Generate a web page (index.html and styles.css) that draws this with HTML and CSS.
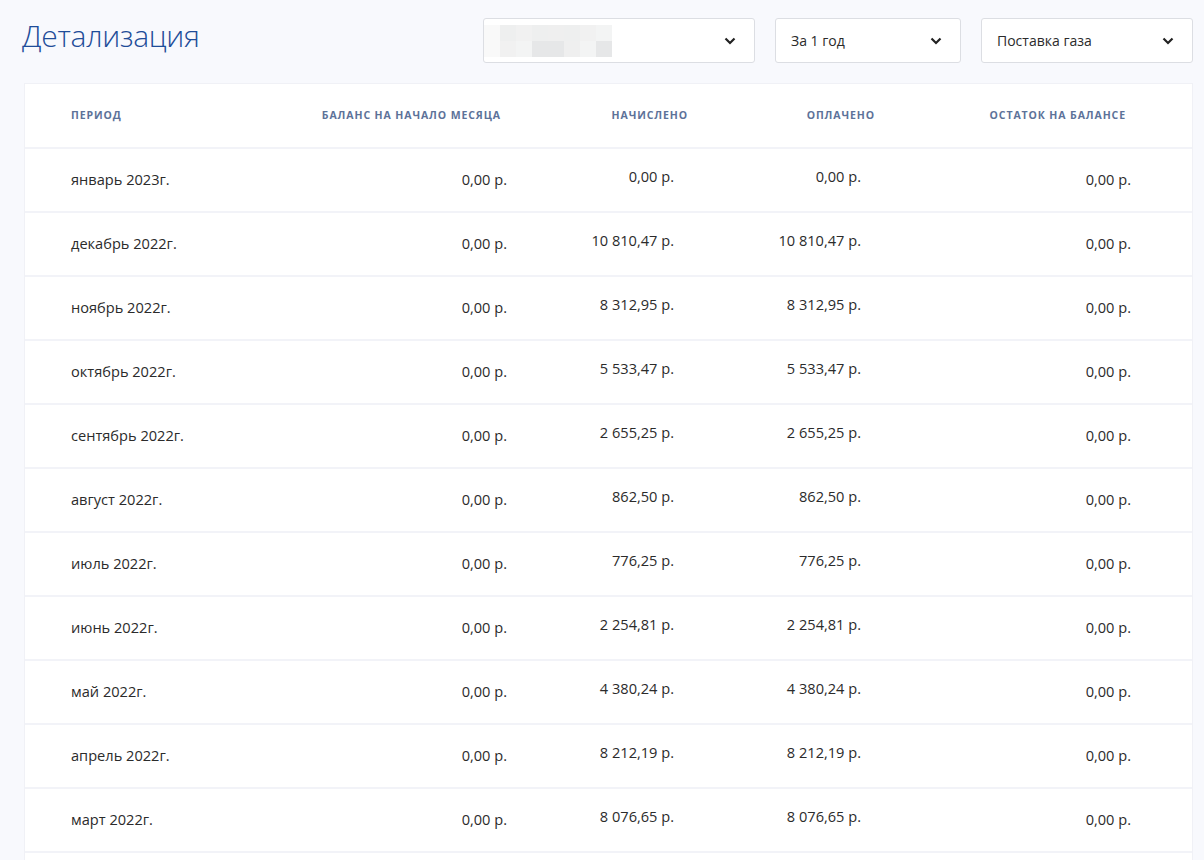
FILE: index.html
```html
<!DOCTYPE html>
<html lang="ru">
<head>
<meta charset="utf-8">
<title>Детализация</title>
<link rel="stylesheet" href="styles.css">
</head>
<body>
<div class="page">
  <div class="top">
    <h1 class="title">Детализация</h1>
    <div class="filters">
      <div class="select select-account">
        <div class="blur">
          <i class="c1"></i><i class="c2"></i><i class="c3"></i><i class="c2"></i><i class="c4"></i><i class="c2"></i><i class="c3"></i><i class="c5"></i>
          <i class="c1"></i><i class="c3"></i><i class="c5"></i><i class="c6"></i><i class="c6"></i><i class="c4"></i><i class="c5"></i><i class="c6"></i>
        </div>
        <svg class="chev" viewBox="0 0 12 8" width="12" height="8"><path d="M1.5 1.5 L6 6 L10.5 1.5" fill="none" stroke="#222" stroke-width="2.2"/></svg>
      </div>
      <div class="select select-period">
        <span>За 1 год</span>
        <svg class="chev" viewBox="0 0 12 8" width="12" height="8"><path d="M1.5 1.5 L6 6 L10.5 1.5" fill="none" stroke="#222" stroke-width="2.2"/></svg>
      </div>
      <div class="select select-service">
        <span>Поставка газа</span>
        <svg class="chev" viewBox="0 0 12 8" width="12" height="8"><path d="M1.5 1.5 L6 6 L10.5 1.5" fill="none" stroke="#222" stroke-width="2.2"/></svg>
      </div>
    </div>
  </div>

  <div class="card">
    <div class="row head">
      <div class="c c-period">Период</div>
      <div class="c c-start">Баланс на начало месяца</div>
      <div class="c c-acc">Начислено</div>
      <div class="c c-paid">Оплачено</div>
      <div class="c c-rest">Остаток на балансе</div>
    </div>
    <div class="row"><div class="c c-period">январь 2023г.</div><div class="c c-start">0,00 р.</div><div class="c c-acc">0,00 р.</div><div class="c c-paid">0,00 р.</div><div class="c c-rest">0,00 р.</div></div>
    <div class="row"><div class="c c-period">декабрь 2022г.</div><div class="c c-start">0,00 р.</div><div class="c c-acc">10 810,47 р.</div><div class="c c-paid">10 810,47 р.</div><div class="c c-rest">0,00 р.</div></div>
    <div class="row"><div class="c c-period">ноябрь 2022г.</div><div class="c c-start">0,00 р.</div><div class="c c-acc">8 312,95 р.</div><div class="c c-paid">8 312,95 р.</div><div class="c c-rest">0,00 р.</div></div>
    <div class="row"><div class="c c-period">октябрь 2022г.</div><div class="c c-start">0,00 р.</div><div class="c c-acc">5 533,47 р.</div><div class="c c-paid">5 533,47 р.</div><div class="c c-rest">0,00 р.</div></div>
    <div class="row"><div class="c c-period">сентябрь 2022г.</div><div class="c c-start">0,00 р.</div><div class="c c-acc">2 655,25 р.</div><div class="c c-paid">2 655,25 р.</div><div class="c c-rest">0,00 р.</div></div>
    <div class="row"><div class="c c-period">август 2022г.</div><div class="c c-start">0,00 р.</div><div class="c c-acc">862,50 р.</div><div class="c c-paid">862,50 р.</div><div class="c c-rest">0,00 р.</div></div>
    <div class="row"><div class="c c-period">июль 2022г.</div><div class="c c-start">0,00 р.</div><div class="c c-acc">776,25 р.</div><div class="c c-paid">776,25 р.</div><div class="c c-rest">0,00 р.</div></div>
    <div class="row"><div class="c c-period">июнь 2022г.</div><div class="c c-start">0,00 р.</div><div class="c c-acc">2 254,81 р.</div><div class="c c-paid">2 254,81 р.</div><div class="c c-rest">0,00 р.</div></div>
    <div class="row"><div class="c c-period">май 2022г.</div><div class="c c-start">0,00 р.</div><div class="c c-acc">4 380,24 р.</div><div class="c c-paid">4 380,24 р.</div><div class="c c-rest">0,00 р.</div></div>
    <div class="row"><div class="c c-period">апрель 2022г.</div><div class="c c-start">0,00 р.</div><div class="c c-acc">8 212,19 р.</div><div class="c c-paid">8 212,19 р.</div><div class="c c-rest">0,00 р.</div></div>
    <div class="row"><div class="c c-period">март 2022г.</div><div class="c c-start">0,00 р.</div><div class="c c-acc">8 076,65 р.</div><div class="c c-paid">8 076,65 р.</div><div class="c c-rest">0,00 р.</div></div>
    <div class="row row-tail"></div>
  </div>
</div>
</body>
</html>
```
FILE: styles.css
```css
* { box-sizing: border-box; }
html, body { margin: 0; padding: 0; }
body {
  background: #f8f9fd;
  font-family: "Open Sans", "Noto Sans", sans-serif;
  color: #2b2b2b;
  overflow: hidden;
  height: 860px;
}
.page { padding: 0 11px 0 24px; }
.top {
  display: flex;
  justify-content: space-between;
  align-items: flex-start;
  height: 83px;
}
.title {
  margin: 17px 0 0 -2px;
  font-family: "Open Sans", sans-serif;
  font-weight: 300;
  font-size: 30px;
  line-height: 38px;
  color: #1f4d99;
  letter-spacing: -0.3px;
}
.filters {
  display: flex;
  gap: 20px;
  margin-top: 18px;
}
.select {
  height: 45px;
  background: #fff;
  border: 1px solid #dcdee3;
  border-radius: 3px;
  display: flex;
  align-items: center;
  justify-content: space-between;
  padding: 0 18px 0 15px;
  font-size: 14px;
  color: #2b2b2b;
}
.select-account { width: 272px; padding-left: 0; }
.select-period { width: 186px; }
.select-service { width: 212px; }
.chev { display: block; }
.blur {
  display: grid;
  grid-template-columns: repeat(8, 16px);
  grid-template-rows: 16px 16px;
}
.blur i { display: block; }
.c1 { background: #f9f9f9; }
.c2 { background: #eeefef; }
.c3 { background: #f1f1f1; }
.c4 { background: #efefef; }
.c5 { background: #f3f4f4; }
.c6 { background: #e6e7e8; }

.card {
  background: #fff;
  border: 1px solid #f0f1f6;
  border-bottom: none;
}
.row {
  display: grid;
  grid-template-columns: 229px 210px 180px 190px 260px;
  padding-left: 46px;
  height: 64px;
  align-items: center;
  border-top: 2px solid #f2f3f8;
  font-size: 14.6px;
  padding-bottom: 3px;
}
.row.head {
  border-top: none;
  height: 63px;
  padding-bottom: 2px;
  font-size: 10.5px;
  font-weight: 700;
  text-transform: uppercase;
  letter-spacing: 0.9px;
  color: #5d7299;
}
.c { white-space: nowrap; }
.c-start, .c-acc, .c-paid, .c-rest { text-align: right; }
.row .c-start { padding-right: 3px; }
.row .c-acc { padding-right: 16px; padding-bottom: 5px; }
.row .c-paid { padding-right: 19px; padding-bottom: 5px; }
.row .c-rest { padding-right: 9px; }
.row.head .c-start { padding-right: 9px; padding-bottom: 0; }
.row.head .c-acc { padding-right: 2px; padding-bottom: 0; }
.row.head .c-paid { padding-right: 5px; padding-bottom: 0; }
.row.head .c-rest { padding-right: 14px; padding-bottom: 0; }
```
